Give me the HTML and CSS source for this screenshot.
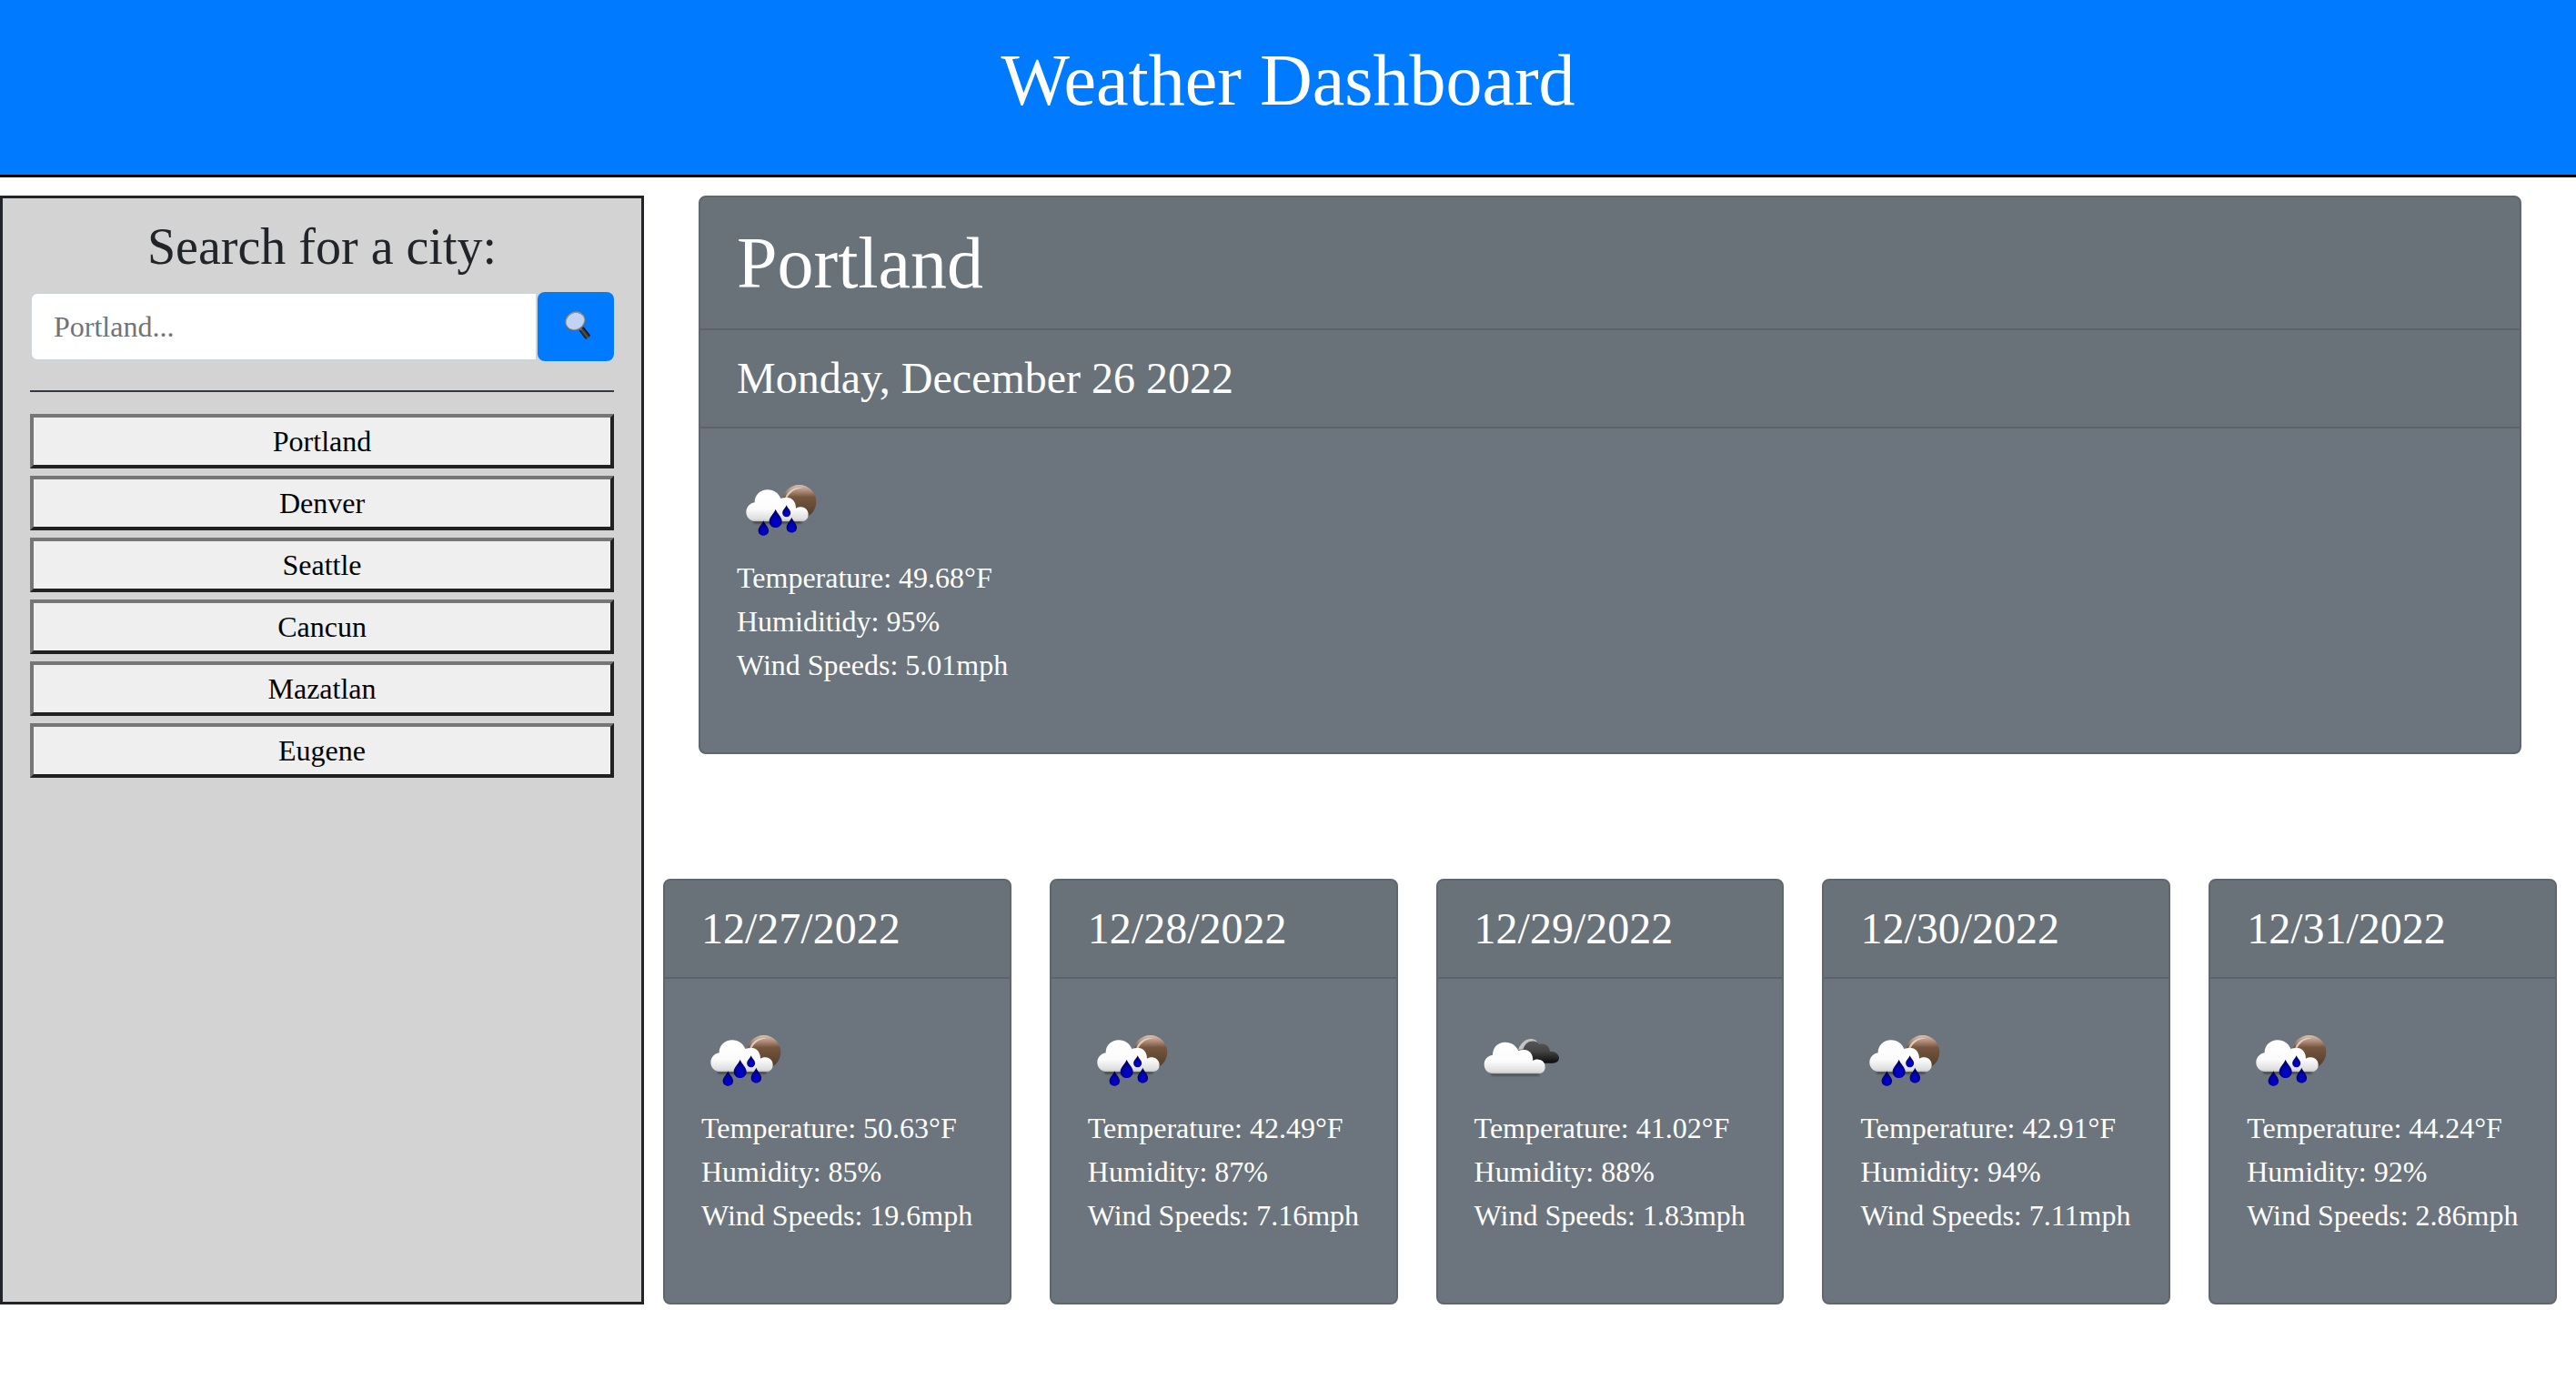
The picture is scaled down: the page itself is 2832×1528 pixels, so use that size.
FILE: index.html
```html
<!DOCTYPE html>
<html lang="en">
<head>
  <meta charset="utf-8">
  <meta name="viewport" content="width=device-width, initial-scale=1">
  <title>Weather Dashboard</title>
  <link rel="stylesheet" href="styles.css">
</head>
<body>
  <!-- Shared weather icons -->
  <svg class="sprite" aria-hidden="true">
    <defs>
      <linearGradient id="cloud-fill" x1="0" y1="0" x2="0" y2="1">
        <stop offset="0" stop-color="#fff"/>
        <stop offset=".6" stop-color="#fcfcfc"/>
        <stop offset=".92" stop-color="#dedede"/>
        <stop offset="1" stop-color="#bdbdbd"/>
      </linearGradient>
      <linearGradient id="moon-fill" x1="0" y1="0" x2="0" y2="1">
        <stop offset="0" stop-color="#d9c2b5"/>
        <stop offset=".2" stop-color="#a98672"/>
        <stop offset=".36" stop-color="#76563f"/>
        <stop offset="1" stop-color="#4f3b2a"/>
      </linearGradient>
      <linearGradient id="dark-fill" x1="0" y1="0" x2="0" y2="1">
        <stop offset="0" stop-color="#5c5c5c"/>
        <stop offset=".5" stop-color="#444"/>
        <stop offset="1" stop-color="#0c0c0c"/>
      </linearGradient>
      <radialGradient id="drop-fill" cx=".5" cy=".7" r=".6">
        <stop offset="0" stop-color="#0000d8"/>
        <stop offset=".45" stop-color="#0000b4"/>
        <stop offset="1" stop-color="#000050"/>
      </radialGradient>
      <linearGradient id="handle-fill" x1="0" y1="0" x2="1" y2="0">
        <stop offset="0" stop-color="#111"/>
        <stop offset=".45" stop-color="#555"/>
        <stop offset="1" stop-color="#050505"/>
      </linearGradient>
      <filter id="soft" x="-20%" y="-100%" width="140%" height="300%">
        <feGaussianBlur stdDeviation="3"/>
      </filter>
      <path id="drop" d="M0 -30 C5 -16 21 -4 21 10 C21 23 12 31 0 31 C-12 31 -21 23 -21 10 C-21 -4 -5 -16 0 -30Z" fill="url(#drop-fill)"/>
    </defs>
    <symbol id="rain" viewBox="30 3 300 300">
      <circle cx="236" cy="125" r="56" fill="url(#moon-fill)"/>
      <path d="M188 119 C193 90 218 73 247 79 C222 81 202 94 194 119Z" fill="#eaddd5" opacity=".8"/>
      <rect x="84" y="183" width="162" height="13" rx="6" fill="#333" opacity=".8" filter="url(#soft)"/>
      <path d="M92 190 C73 189 61 175 61 159 C61 143 72 130 89 127 C88 103 108 85 132 85 C152 85 168 97 175 114 C184 111 194 110 203 112 C216 116 225 128 225 146 C230 143 236 142 242 142 C256 143 266 153 266 167 C266 180 257 189 244 190Z" fill="url(#cloud-fill)"/>
      <use href="#drop" transform="translate(158 179)"/>
      <use href="#drop" transform="translate(118 211) scale(.82)"/>
      <use href="#drop" transform="translate(194 155) scale(.64)"/>
      <use href="#drop" transform="translate(211 201) scale(.82)"/>
    </symbol>
    <symbol id="clouds" viewBox="32 18 300 300">
      <path d="M186 140 C187 114 200 98 218 97 C230 97 240 104 245 114 C263 109 279 119 281 137 C298 136 311 146 311 159 C310 170 302 176 289 176 L215 176Z" fill="url(#dark-fill)"/>
      <path d="M176 132 C186 106 204 95 220 96 C231 97 237 101 240 108 C219 97 200 107 193 130Z" fill="#d6d6d6" opacity=".85"/>
      <rect x="87" y="205" width="160" height="13" rx="5" fill="#444" opacity=".8" filter="url(#soft)"/>
      <path d="M95 211 C75 210 64 197 64 180 C64 164 75 152 92 149 C92 123 110 107 133 107 C154 107 170 118 177 136 C185 133 194 131 202 133 C217 137 225 149 225 168 C231 164 237 163 243 164 C257 165 265 175 265 188 C265 202 257 210 244 211Z" fill="url(#cloud-fill)"/>
    </symbol>
    <symbol id="magnifier" viewBox="168 126 102 102">
      <g transform="rotate(-38 246 197)">
        <rect x="237" y="180" width="20" height="39" rx="5" fill="url(#handle-fill)"/>
      </g>
      <path d="M231 180 L237 187" stroke="#888" stroke-width="5"/>
      <ellipse cx="217" cy="159" rx="33" ry="29" transform="rotate(-32 217 159)" fill="#bfd3f6" stroke="#62676d" stroke-width="5"/>
      <ellipse cx="217" cy="158" rx="32" ry="28" transform="rotate(-32 217 158)" fill="none" stroke="#b9b6ae" stroke-width="2"/>
    </symbol>
  </svg>

  <header class="banner">
    <h1 class="title">Weather Dashboard</h1>
  </header>

  <div class="layout">
    <aside class="sidebar">
      <form class="search">
        <label class="search-label" for="city">Search for a city:</label>
        <div class="search-row">
          <input class="search-input" id="city" type="text" placeholder="Portland...">
          <button class="search-button" type="button" aria-label="Search">
            <svg class="search-icon" aria-hidden="true"><use href="#magnifier"/></svg>
          </button>
        </div>
      </form>
      <hr class="divider">
      <div class="history">
        <button class="history-button" type="button">Portland</button>
        <button class="history-button" type="button">Denver</button>
        <button class="history-button" type="button">Seattle</button>
        <button class="history-button" type="button">Cancun</button>
        <button class="history-button" type="button">Mazatlan</button>
        <button class="history-button" type="button">Eugene</button>
      </div>
    </aside>

    <main class="content">
      <section class="card current">
        <h2 class="card-header title">Portland</h2>
        <h3 class="card-header date">Monday, December 26 2022</h3>
        <div class="card-body">
          <svg class="weather-icon" role="img" aria-label="Rain"><use href="#rain"/></svg>
          <p class="readings">Temperature: 49.68°F<br>Humiditidy: 95%<br>Wind Speeds: 5.01mph</p>
        </div>
      </section>

      <section class="forecast">
        <article class="card">
          <h3 class="card-header date">12/27/2022</h3>
          <div class="card-body">
            <svg class="weather-icon" role="img" aria-label="Rain"><use href="#rain"/></svg>
            <p class="readings">Temperature: 50.63°F<br>Humidity: 85%<br>Wind Speeds: 19.6mph</p>
          </div>
        </article>
        <article class="card">
          <h3 class="card-header date">12/28/2022</h3>
          <div class="card-body">
            <svg class="weather-icon" role="img" aria-label="Rain"><use href="#rain"/></svg>
            <p class="readings">Temperature: 42.49°F<br>Humidity: 87%<br>Wind Speeds: 7.16mph</p>
          </div>
        </article>
        <article class="card">
          <h3 class="card-header date">12/29/2022</h3>
          <div class="card-body">
            <svg class="weather-icon" role="img" aria-label="Cloudy"><use href="#clouds"/></svg>
            <p class="readings">Temperature: 41.02°F<br>Humidity: 88%<br>Wind Speeds: 1.83mph</p>
          </div>
        </article>
        <article class="card">
          <h3 class="card-header date">12/30/2022</h3>
          <div class="card-body">
            <svg class="weather-icon" role="img" aria-label="Rain"><use href="#rain"/></svg>
            <p class="readings">Temperature: 42.91°F<br>Humidity: 94%<br>Wind Speeds: 7.11mph</p>
          </div>
        </article>
        <article class="card">
          <h3 class="card-header date">12/31/2022</h3>
          <div class="card-body">
            <svg class="weather-icon" role="img" aria-label="Rain"><use href="#rain"/></svg>
            <p class="readings">Temperature: 44.24°F<br>Humidity: 92%<br>Wind Speeds: 2.86mph</p>
          </div>
        </article>
      </section>
    </main>
  </div>
</body>
</html>
```
FILE: styles.css
```css
* {
  box-sizing: border-box;
}

body {
  margin: 0;
  background: #fff;
  color: #212529;
  font-family: "Liberation Serif", "Times New Roman", serif;
  font-size: 32px;
  line-height: 48px;
}

h1,
h2,
h3,
p {
  margin: 0;
  font-weight: 400;
}

button,
input {
  font: inherit;
}

.sprite {
  display: block;
  width: 0;
  height: 0;
}

.title {
  font-size: 80px;
  line-height: 96px;
}

.banner {
  padding: 40px 40px 56px;
  border-bottom: 3px solid #000;
  background: #007bff;
  color: #fff;
  text-align: center;
}

.layout {
  display: grid;
  grid-template-columns: 1fr 3fr;
  margin-top: 20px;
}

/* Sidebar */

.sidebar {
  min-width: 0;
  padding: 20px 30px;
  border: 3px solid #212529;
  background: #d3d3d3;
}

.search-label {
  display: block;
  margin-bottom: 16px;
  font-size: 56px;
  line-height: 67px;
  text-align: center;
}

.search-row {
  display: flex;
}

.search-input {
  flex: 1;
  min-width: 0;
  height: 76px;
  padding: 12px 24px;
  border: 2px solid #ced4da;
  border-radius: 8px 0 0 8px;
  background: #fff;
  color: #495057;
}

.search-input::placeholder {
  color: #6c757d;
  opacity: 1;
}

.search-button {
  display: flex;
  align-items: center;
  justify-content: center;
  width: 84px;
  padding: 0;
  border: 0;
  border-radius: 8px;
  background: #007bff;
}

.search-icon {
  width: 34px;
  height: 34px;
}

.divider {
  height: 2px;
  margin: 32px 0 24px;
  border: 0;
  background: #343a40;
}

.history {
  display: grid;
  gap: 8px;
}

.history-button {
  padding: 2px 12px;
  border: 4px solid;
  border-color: #767676 #212121 #212121 #767676;
  background: #efefef;
  color: #000;
}

/* Weather cards */

.content {
  min-width: 0;
}

.card {
  border: 2px solid #5f666d;
  border-radius: 8px;
  background: #6c757d;
  color: #fff;
}

.card-header {
  padding: 24px 40px;
  border-bottom: 2px solid #5c646a;
  background: #697179;
}

.card-header:first-child {
  border-radius: 6px 6px 0 0;
}

.date {
  font-size: 48px;
  line-height: 58px;
}

.card-body {
  padding: 40px;
}

.weather-icon {
  display: block;
  width: 100px;
  height: 100px;
}

.readings {
  margin-bottom: 32px;
}

.current {
  margin: 0 60px 137px;
}

.forecast {
  display: grid;
  grid-template-columns: repeat(5, 1fr);
  gap: 42px;
  padding: 0 21px;
}
```
